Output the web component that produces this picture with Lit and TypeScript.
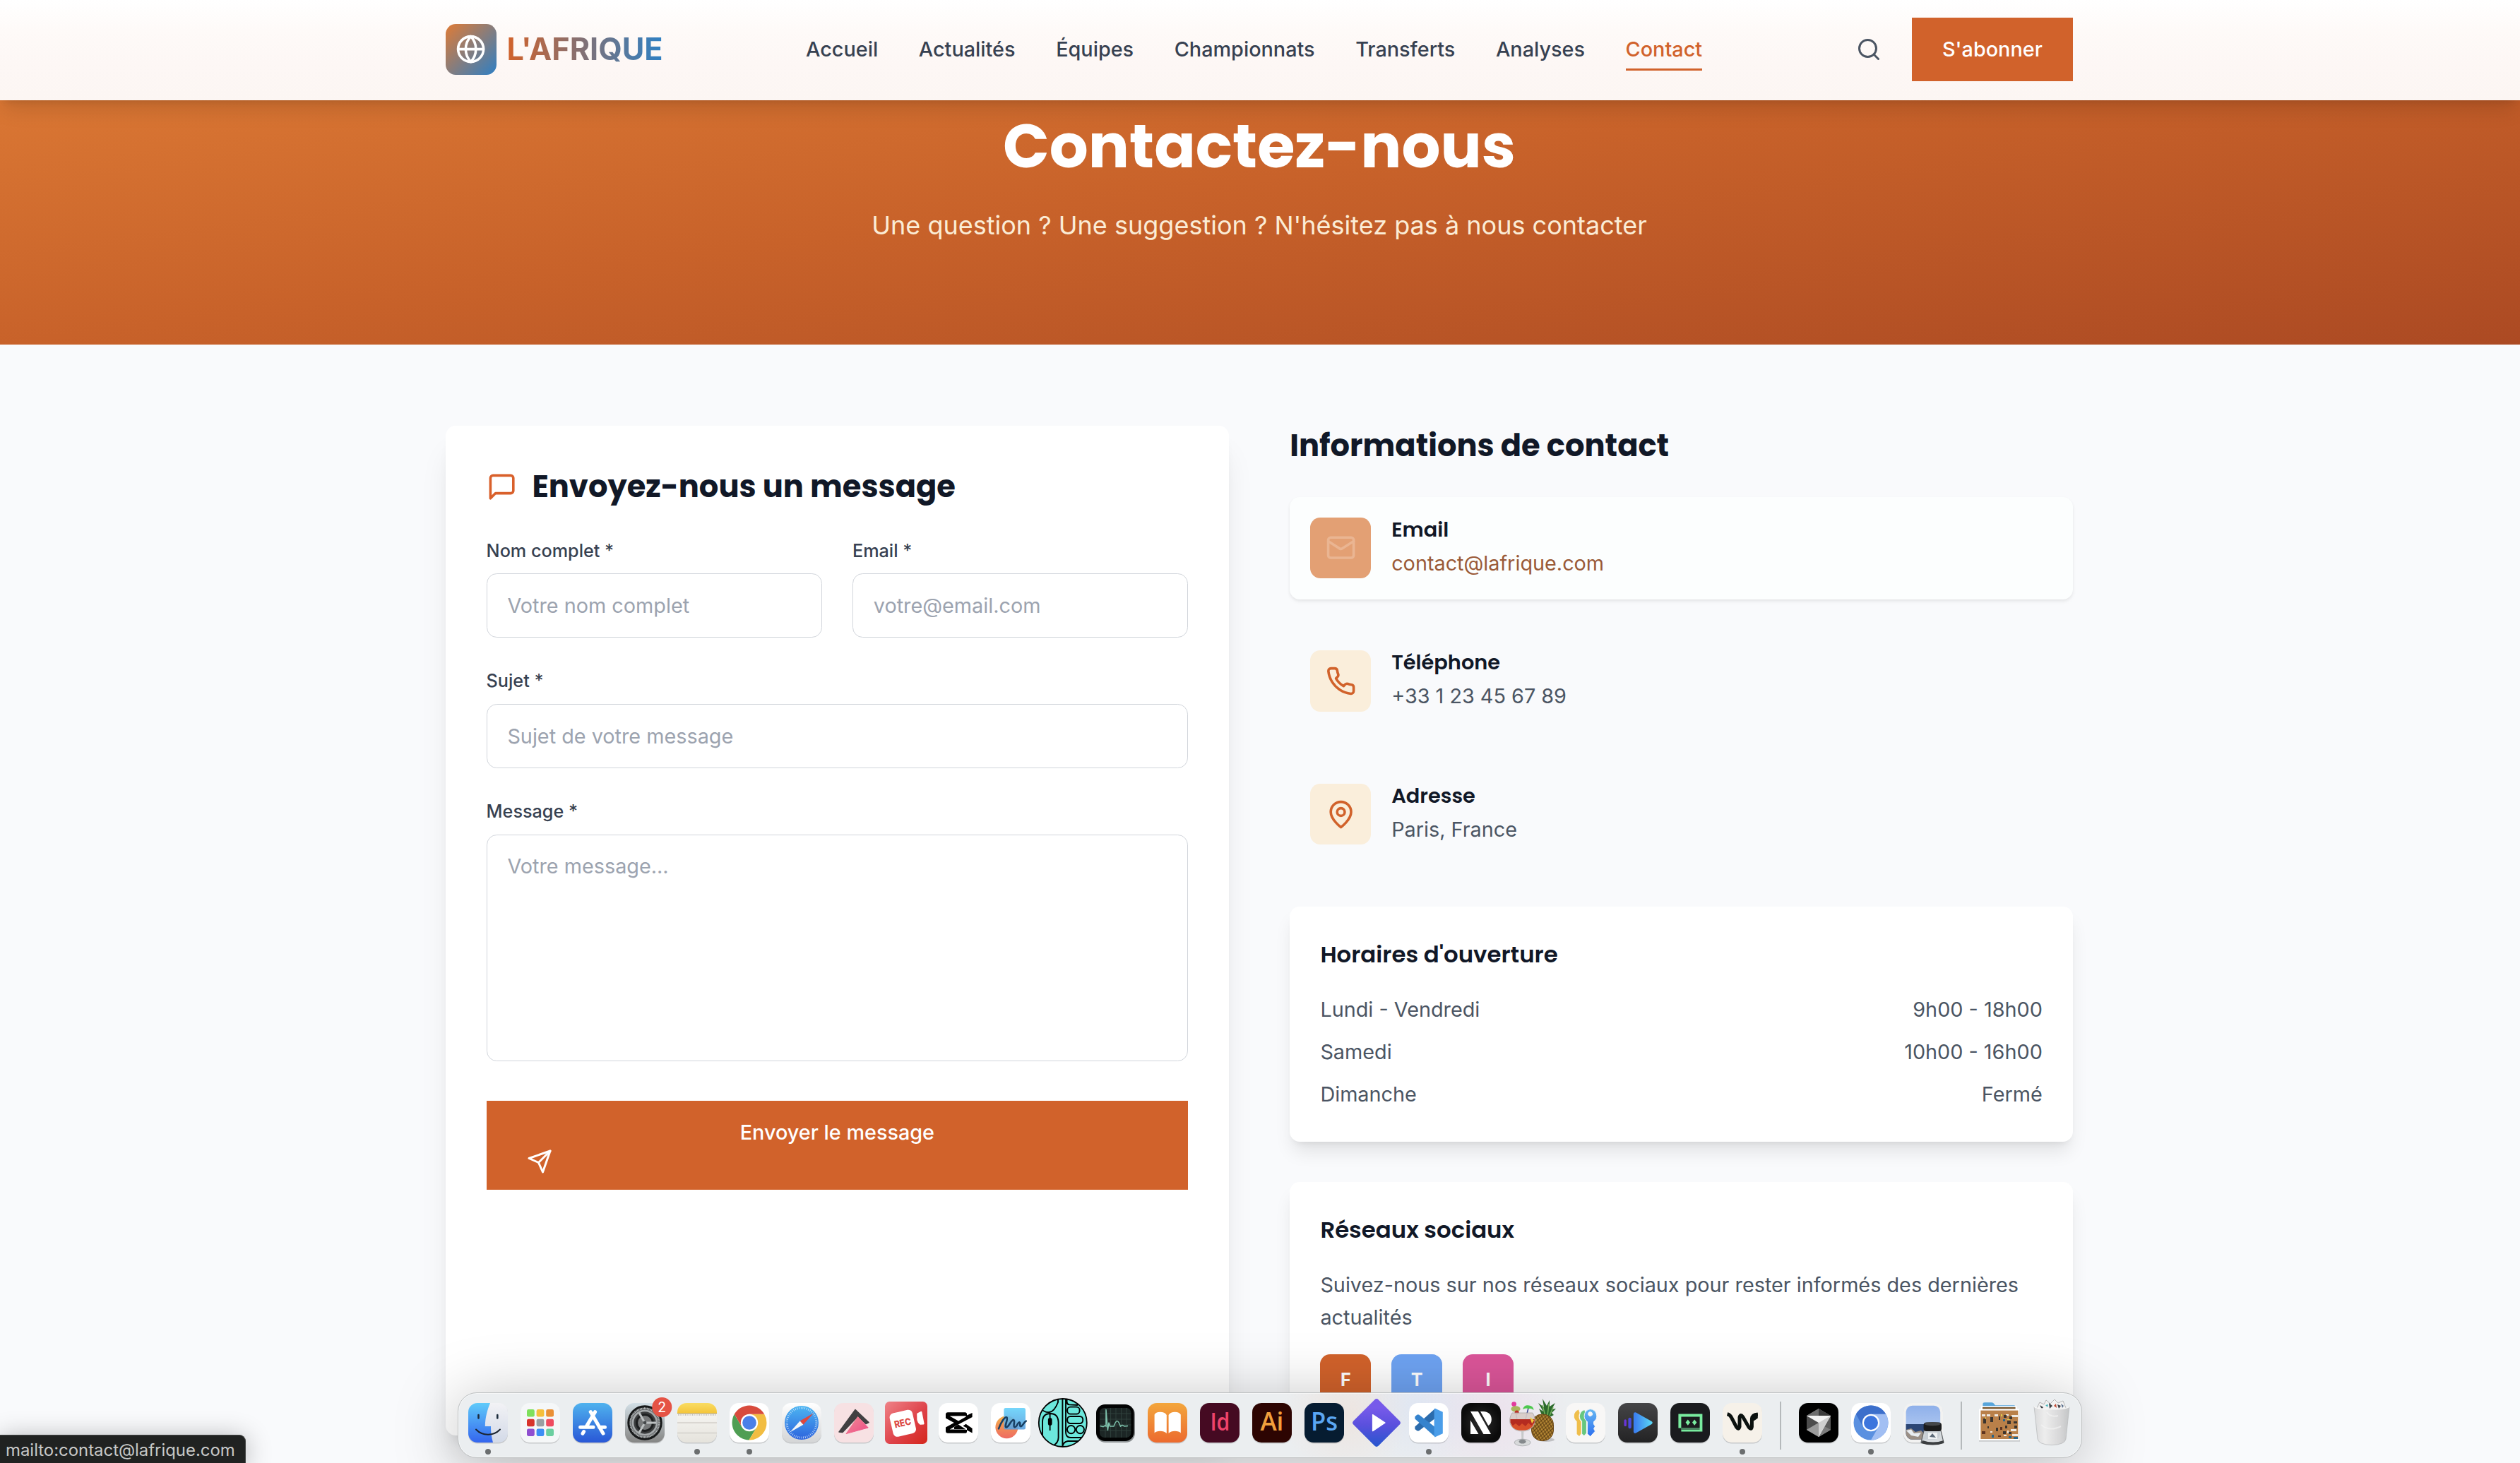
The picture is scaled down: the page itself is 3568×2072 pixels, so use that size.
import { LitElement, html, css, svg, type TemplateResult } from "lit";
import { customElement, property } from "lit/decorators.js";
import { classMap } from "lit/directives/class-map.js";

const stroke = (body: TemplateResult) => html`
  <svg class="icon" viewBox="0 0 24 24" width="100%" height="100%" fill="none" stroke="currentColor"
    stroke-width="2" stroke-linecap="round" stroke-linejoin="round">${body}</svg>`;

const iconStyles = css`
  .icon {
    display: block;
  }
`;

const icons = {
  globe: stroke(svg`<circle cx="12" cy="12" r="10"/><path d="M12 2a14.5 14.5 0 0 0 0 20 14.5 14.5 0 0 0 0-20"/><path d="M2 12h20"/>`),
  search: stroke(svg`<circle cx="11" cy="11" r="8"/><path d="m21 21-4.3-4.3"/>`),
  message: stroke(svg`<path d="M21 15a2 2 0 0 1-2 2H7l-4 4V5a2 2 0 0 1 2-2h14a2 2 0 0 1 2 2z"/>`),
  mail: stroke(svg`<rect width="20" height="16" x="2" y="4" rx="2"/><path d="m22 7-8.97 5.7a1.94 1.94 0 0 1-2.06 0L2 7"/>`),
  phone: stroke(svg`<path d="M22 16.92v3a2 2 0 0 1-2.18 2 19.79 19.79 0 0 1-8.63-3.07 19.5 19.5 0 0 1-6-6 19.79 19.79 0 0 1-3.07-8.67A2 2 0 0 1 4.11 2h3a2 2 0 0 1 2 1.72 12.84 12.84 0 0 0 .7 2.81 2 2 0 0 1-.45 2.11L8.09 9.91a16 16 0 0 0 6 6l1.27-1.27a2 2 0 0 1 2.11-.45 12.84 12.84 0 0 0 2.81.7A2 2 0 0 1 22 16.92z"/>`),
  pin: stroke(svg`<path d="M20 10c0 6-8 12-8 12s-8-6-8-12a8 8 0 0 1 16 0Z"/><circle cx="12" cy="10" r="3"/>`),
  send: stroke(svg`<path d="m22 2-7 20-4-9-9-4Z"/><path d="M22 2 11 13"/>`),
};

/* ---------- Dock artwork: every tile is drawn in a 74 x 74 cell ---------- */

const tile = (fill: string) => svg`<rect x="9" y="10" width="56" height="56.5" rx="13" fill="#000" opacity=".16"/><rect x="9" y="9" width="56" height="56" rx="13" fill=${fill}/>`;

const grid = [
  ["#7fe05c", "#f5bf3c", "#ea9036"],
  ["#d8342c", "#9a9fa3", "#ef4c60"],
  ["#8f4fd0", "#3c8ef5", "#6bcfa0"],
];

const dockArt: Record<string, TemplateResult> = {
  finder: svg`
    <defs><linearGradient id="fi" x2="0" y2="1"><stop stop-color="#5fcbfa"/><stop offset="1" stop-color="#3465ee"/></linearGradient>
    <linearGradient id="fj" x2="0" y2="1"><stop stop-color="#f2f2f5"/><stop offset="1" stop-color="#d3dae8"/></linearGradient></defs>
    ${tile("url(#fj)")}
    <path d="M22 9H40C36 19 33 29 32.8 42H41C41 51 42 58 44 65H22A13 13 0 0 1 9 52V22A13 13 0 0 1 22 9Z" fill="url(#fi)"/>
    <path d="M23.5 26v4.5M50.3 26v4.5" stroke="#1c2c3c" stroke-width="2.6" stroke-linecap="round"/>
    <path d="M20 46.5C29 56 45 56 54 46.5" fill="none" stroke="#1b2430" stroke-width="2" stroke-linecap="round"/>`,
  launchpad: svg`${tile("#f5f7f8")}${grid.map((row, r) => row.map((c, i) => svg`<rect x=${18 + i * 13.6} y=${18 + r * 13.7} width="10.8" height="10.6" rx="2.4" fill=${c}/>`))}`,
  appstore: svg`
    <defs><linearGradient id="as" x2="0" y2="1"><stop stop-color="#4fb2ee"/><stop offset="1" stop-color="#2957d6"/></linearGradient></defs>
    ${tile("url(#as)")}
    <g stroke="#fff" stroke-width="5" stroke-linecap="round" fill="none"><path d="M40.6 21.6 28 42.6M24.6 49.5l-1.6 2.8M34.2 21.6 52 52.2M19.6 43.3H38M46.5 43.3h8"/></g>`,
  settings: svg`
    <defs><linearGradient id="se" x2="0" y2="1"><stop stop-color="#d2dfe6"/><stop offset="1" stop-color="#858584"/></linearGradient></defs>
    ${tile("url(#se)")}
    <circle cx="37" cy="37" r="23" fill="#5d6062" stroke="#17191a" stroke-width="3.4"/>
    <circle cx="37" cy="37" r="20.4" fill="none" stroke="#b6babb" stroke-width="2.6" stroke-dasharray="1.2 .9"/>
    <circle cx="37" cy="37" r="17" fill="#3b3d3e" stroke="#a5a9ab" stroke-width="2.6"/>
    <circle cx="37" cy="37" r="11.4" fill="#77797a" stroke="#1d1f20" stroke-width="3"/>
    <path d="M37 37H53M37 37 29 23M37 37 29 51" stroke="#bcc0c1" stroke-width="3"/>
    <circle cx="37" cy="37" r="2.4" fill="#45484a"/>
    <circle cx="61.3" cy="15" r="14" fill="#e55345"/>
    <text x="61.3" y="22" font-size="19.5" text-anchor="middle" fill="#fff" font-family="Inter, sans-serif">2</text>`,
  notes: svg`
    <defs><linearGradient id="no" x2="0" y2="1"><stop stop-color="#f9dc63"/><stop offset="1" stop-color="#f4c53a"/></linearGradient>
    <linearGradient id="np" x2="0" y2="1"><stop stop-color="#fbfaf8"/><stop offset="1" stop-color="#e5e3dc"/></linearGradient></defs>
    ${tile("url(#np)")}
    <path d="M9 23.4V22A13 13 0 0 1 22 9H52A13 13 0 0 1 65 22V23.4Z" fill="url(#no)"/>
    <path d="M9 23.6H65" stroke="#b99a45" stroke-width="1"/>
    <path d="M10 25.8H64" stroke="#bdbbb4" stroke-width="1.8" stroke-dasharray="1.1 1.4"/>
    <path d="M9 37H65M9 51.5H65" stroke="#d2d0ca" stroke-width="1.3"/>`,
  chrome: svg`${tile("#fff")}
    <path d="M15.8 24.8A24.5 24.5 0 0 0 36.5 61.5L47.6 43.1 37 37 26.4 43.1Z" fill="#4f9e53"/>
    <path d="M58.2 24.8A24.5 24.5 0 0 1 36.5 61.5L47.6 43.1 37 24.8Z" fill="#f2bd42"/>
    <path d="M15.8 24.8A24.5 24.5 0 0 1 58.2 24.8H37L26.4 43.1Z" fill="#d84b3d"/>
    <circle cx="37" cy="37" r="12.2" fill="#fff"/><circle cx="37" cy="37" r="9.8" fill="#4a7fe8"/>`,
  safari: svg`
    <defs><linearGradient id="sa" x2="0" y2="1"><stop stop-color="#4cb5f2"/><stop offset="1" stop-color="#2d63dd"/></linearGradient>
    <linearGradient id="sb" x2="0" y2="1"><stop stop-color="#fff"/><stop offset="1" stop-color="#d4d5d6"/></linearGradient></defs>
    ${tile("url(#sb)")}<circle cx="37" cy="37" r="24" fill="url(#sa)"/>
    <circle cx="37" cy="37" r="21" fill="none" stroke="#e3f1fc" stroke-width="3" stroke-dasharray=".8 1.9" opacity=".85"/>
    <path d="M53.8 23.6 39.3 39.8 34.6 34.4Z" fill="#e0473d"/><path d="M20.4 50.6 34.6 34.4 39.3 39.8Z" fill="#f4f6f8"/>`,
  arctype: svg`
    <defs><linearGradient id="ar" x2="1" y2="1"><stop stop-color="#ee8d93"/><stop offset="1" stop-color="#f04a87"/></linearGradient></defs>
    ${tile("#f7e1e3")}
    <path d="M39 18.5 58 36.5 54 38.5 42.5 28 21 50.5 16 50Z" fill="#414042" stroke="#414042" stroke-width="1.5" stroke-linejoin="round"/>
    <path d="M42.6 28.5 57.2 44 26 52.6Z" fill="url(#ar)" stroke="url(#ar)" stroke-linejoin="round"/>`,
  rec: svg`
    <defs><linearGradient id="re" x2="1" y2="1"><stop stop-color="#ef8388"/><stop offset=".55" stop-color="#de434a"/><stop offset="1" stop-color="#d5261c"/></linearGradient></defs>
    <rect x="7" y="7" width="60" height="60" rx="6.5" fill="url(#re)"/>
    <g transform="rotate(-13 32 37)"><rect x="15.6" y="20.8" width="33" height="34" rx="6" fill="#fff"/>
    <text x="32" y="42" text-anchor="middle" font-size="13.5" font-weight="800" textLength="24" lengthAdjust="spacingAndGlyphs" fill="#dc4a44" font-family="Inter, sans-serif">REC</text></g>
    <path d="M53.4 24.5 58.2 22 61.4 38.2 57 38.6Q54.5 37 53.6 33Z" fill="#fff" stroke="#fff" stroke-width="2.4" stroke-linejoin="round"/>`,
  capcut: svg`${tile("#fff")}
    <path d="M56.6 22.9V29L31 42.6V47H49V44.6L43.4 41.4 47.6 38.8 56.6 45V51.4L49 47.6V49.4Q49 51.8 46.4 51.8H22Q19 51.8 19 48.8V43.6L30.8 37 19 30.6V25.4Q19 22.2 22 22.2H46.4Q49 22.2 49 24.8V26.6ZM24.6 27.6 37 34.4 47.6 28.6V27.2ZM24.6 46.6H47.6L37 39.6Z" fill="#000" fill-rule="evenodd"/>`,
  freeform: svg`
    <defs><linearGradient id="fr" x2="0" y2="1"><stop stop-color="#f4b04a"/><stop offset="1" stop-color="#ee6a62"/></linearGradient>
    <linearGradient id="fs" x2="0" y2="1"><stop stop-color="#66d2fa"/><stop offset="1" stop-color="#5a9ede"/></linearGradient></defs>
    ${tile("#fff")}<circle cx="31.4" cy="43.2" r="16" fill="url(#fr)"/>
    <rect x="27.4" y="16" width="30.6" height="30.6" rx="2.5" fill="url(#fs)" opacity=".9"/>
    <path d="M20 45.4C23 37 28.4 28.2 31.4 29.4C34 31 27.4 42.6 30.6 43.4C34 44 37.6 32.4 41 33C44 34 39.6 42.4 42.6 43.2C45.6 43.8 47.4 35.6 49.6 36.4C51.6 37.4 48.8 42 51.4 42.2C54 42.2 55 36.4 58.8 34.6" fill="none" stroke="#183f63" stroke-width="2.6" stroke-linecap="round"/>`,
  peripherals: svg`
    <defs><clipPath id="pe"><circle cx="36.8" cy="37" r="34"/></clipPath></defs>
    <circle cx="36.8" cy="37" r="34" fill="#6ce8dc" stroke="#000" stroke-width="1.8"/>
    <g clip-path="url(#pe)" fill="none" stroke="#000" stroke-width="1.9">
      <path d="M8 62V36Q8 24 19 24T30.6 36V58Q30.6 66 22 70M18.6 24v8M18.6 40v8"/><rect x="16.8" y="31" width="3.8" height="9" rx="1.9" fill="#000"/>
      <path d="M6 17Q11 23 18 22T30 8V2M36.4 2V72M41 2V50Q41 58 48 58H72M36 72Q37 64 44 63H70"/>
      <path d="M42.6 2V8Q43 11 46 11.4L58 12"/>
      <rect x="43.2" y="14.6" width="17.4" height="10" rx="4.4"/><rect x="43.2" y="28" width="22" height="10" rx="4.4"/>
      <circle cx="48.6" cy="46.6" r="5.6"/><circle cx="61.4" cy="46.6" r="5.6"/></g>`,
  activity: svg`<rect x="10" y="12" width="55" height="53" rx="13" fill="#8c9193"/><rect x="10" y="11" width="53.6" height="52" rx="12.5" fill="#020303"/><rect x="15" y="16" width="44.4" height="42" rx="6.5" fill="#1c2625"/>
    <path d="M23 16V58M30.6 16V58M38 16V58M45.6 16V58M53 16V58M15 24H59.4M15 32H59.4M15 40H59.4M15 48H59.4" stroke="#32443f" stroke-width=".9"/>
    <path d="M15.5 41.5 20 42.6 22.6 41 24 42V18L26.4 48 28 36.6 29.6 42H35Q38 34 40 34.6T44.4 42L47 40.4 50 42 55 41.5" fill="none" stroke="#7fc4ae" stroke-width="1.5"/>`,
  books: svg`
    <defs><linearGradient id="bo" x2="0" y2="1"><stop stop-color="#f3a63c"/><stop offset="1" stop-color="#ec6a2f"/></linearGradient></defs>
    ${tile("url(#bo)")}
    <path d="M35.8 26Q33 21.8 26.6 21.8T18.6 25.6V51.6Q21 48.8 26.6 48.8T35.8 52ZM38.6 26Q41.4 21.8 47.6 21.8T55.8 25.6V51.6Q53.4 48.8 47.6 48.8T38.6 52Z" fill="#fff"/>`,
  indesign: svg`${tile("#450a22")}<text x="23.4" y="48.4" font-size="35" font-weight="600" textLength="28" lengthAdjust="spacingAndGlyphs" fill="#ef436b" font-family="'Open Sans', sans-serif">Id</text>`,
  illustrator: svg`${tile("#2d0502")}<text x="20.4" y="48.4" font-size="36" font-weight="600" textLength="33" lengthAdjust="spacingAndGlyphs" fill="#f2a03c" font-family="'Open Sans', sans-serif">Ai</text>`,
  photoshop: svg`${tile("#061c31")}<text x="18" y="48.4" font-size="36" font-weight="600" textLength="38" lengthAdjust="spacingAndGlyphs" fill="#5aa6f3" font-family="'Open Sans', sans-serif">Ps</text>`,
  diamond: svg`
    <defs><linearGradient id="di" x2="1" y2="1"><stop offset=".2" stop-color="#775aea"/><stop offset=".55" stop-color="#5a50dd"/><stop offset="1" stop-color="#2457cd"/></linearGradient></defs>
    <rect x="12" y="12" width="50" height="50" rx="4" transform="rotate(45 37 37)" fill="url(#di)"/>
    <path d="M31.6 25.6 49 37 31.6 48.6Z" fill="#fff" stroke="#fff" stroke-width="1.4" stroke-linejoin="round"/>`,
  vscode: svg`${tile("#fff")}
    <path d="M45.8 17 17.4 42.6V46L20.6 48.6H23L47 30Z" fill="#2b6bac"/>
    <path d="M45.8 57 17.4 31.4V28.2L20.6 25.6H23L47 44Z" fill="#3583cd"/>
    <path d="M45.6 16.6 56.8 21.8V52.2L45.6 57.4 44.6 55V19Z" fill="#4a9de9"/>`,
  davinci: svg`
    <defs><radialGradient id="da"><stop stop-color="#2c2c2c"/><stop offset="1" stop-color="#0b0b0b"/></radialGradient></defs>
    ${tile("url(#da)")}
    <path d="M22 21H32.8L51 53H40.4ZM22 33.6 33.4 53H22ZM36 21H40Q51.8 21.6 51.8 32.6 51.8 38.4 47.2 41Z" fill="#fff"/>`,
  pineapple: svg`
    <ellipse cx="55" cy="61" rx="12" ry="3" fill="#000" opacity=".18"/>
    <defs><pattern id="pi" width="5" height="6" patternUnits="userSpaceOnUse" patternTransform="rotate(8)"><rect width="5" height="6" fill="#b88a35"/><path d="M0 0 5 6M5 0 0 6" stroke="#5a3c12" stroke-width="1.1"/></pattern></defs>
    <path d="M50 28 45 17 51 21 44 9 52 15 50 3 56 13 60 5 60 14 68 9 63 18 69 17 63 23 66 26 60 29Z" fill="#2c6a2c"/>
    <path d="M54 28 50 12M57 28 59 10M60 27 65 15" stroke="#79b45e" stroke-width="1.4"/>
    <rect x="34.5" y="25" width="31" height="37.5" rx="14.5" fill="url(#pi)" stroke="#6b4716" stroke-width="1"/>
    <path d="M14 33 10.4 12M26 32 30 16" stroke="#3a4590" stroke-width="1.5"/>
    <circle cx="9.6" cy="10.6" r="3.4" fill="#e23a9d"/><ellipse cx="12" cy="17.4" rx="6.6" ry="4.2" fill="#a7b55c"/><circle cx="13.6" cy="22.6" r="3" fill="#c02f24"/>
    <path d="M22 18Q24 11 31 12.4 37 13 37.6 19 33 16 30.4 17.2 26 15.4 22 18Z" fill="#4dc94e"/>
    <path d="M7 23H36Q41 31 38.6 39 34 49 21.4 49T4.4 39Q2 31 7 23Z" fill="#d8cbc7" opacity=".92" stroke="#a5a1a0" stroke-width=".8"/>
    <path d="M4.6 32H38.6Q39 43 30 46.5 21 49 12 46.5 4 43 4.6 32Z" fill="#d7502a"/><path d="M4.6 32H38.6V37L34 41 30 37 26 42 21 38 17 42 12 38 8 41 4.6 37Z" fill="#b42b20"/>
    <path d="M20 49H23.4L23 62H20.4Z" fill="#c7c9ca"/><ellipse cx="21.6" cy="65" rx="11.4" ry="4.8" fill="#d7d9da" stroke="#a3a6a8" stroke-width=".8"/><ellipse cx="21.6" cy="63.6" rx="5" ry="3" fill="#85898c"/>
    <path d="M32 29 38 33.5 35 38Z" fill="#f0cc3b"/>`,
  passwords: svg`
    <defs><linearGradient id="pa" x2="0" y2="1"><stop stop-color="#67b8f2"/><stop offset="1" stop-color="#2c6fef"/></linearGradient></defs>
    ${tile("#f8f7f6")}
    <path d="M27 18.4A9.6 9.6 0 0 0 24.6 35V53L28 56 31 52V30Z" fill="#efbe4b"/>
    <path d="M36 18.4A9.6 9.6 0 0 0 31.4 35V53L35 56 38.6 52V30Z" fill="#66c77f" stroke="#f8f7f6" stroke-width="1.4"/>
    <path d="M43.6 17.6A9.8 9.8 0 0 1 48.6 35.4V39L50.6 42 48.6 45.6 50.6 49 43.6 56.6 39.4 52.6V35.4A9.8 9.8 0 0 1 43.6 17.6ZM43.6 21.6A3 3 0 1 0 43.7 21.6Z" fill="url(#pa)" stroke="#f8f7f6" stroke-width="1" fill-rule="evenodd"/>`,
  player: svg`
    <defs><linearGradient id="pl"><stop stop-color="#3c80f0"/><stop offset="1" stop-color="#58d2f6"/></linearGradient>
    <linearGradient id="pm" x2="0" y2="1"><stop stop-color="#454547"/><stop offset="1" stop-color="#232324"/></linearGradient></defs>
    ${tile("url(#pm)")}
    <path d="M33.2 24.6 55.4 37 33.2 49.6Z" fill="url(#pl)" stroke="url(#pl)" stroke-width="4.6" stroke-linejoin="round"/>
    <path d="M25.6 32V43" stroke="#4b49dd" stroke-width="4.4" stroke-linecap="round"/><path d="M19.2 34V40.4" stroke="#6a35d8" stroke-width="3.4" stroke-linecap="round"/>`,
  robot: svg`${tile("#1a1b1e")}
    <path d="M20.4 24.4H54.4V49.6H24.4V44.6H20.4ZM24.4 28.4V44.6H50.6V28.4Z" fill="#79ec9f" fill-rule="evenodd"/>
    <path d="M24.4 46H50.6" stroke="#1a1b1e" stroke-width="1"/>
    <path d="M33.8 32.4 37 36.6 33.8 40.8 30.6 36.6ZM43.2 32.4 46.4 36.6 43.2 40.8 40 36.6Z" fill="#79ec9f"/>`,
  wave: svg`${tile("#f6f1e9")}
    <path d="M15.6 24.6Q19.6 25.6 21.4 29.4L28.6 43.2Q31.6 47.6 33 42.6V29.4Q34.4 24 37.6 28.6L46 43.2Q49.6 47.8 50.4 42.6V31.4Q51 25.6 58.8 25" fill="none" stroke="#0b110f" stroke-width="5"/>
    <path d="M51 27 54 24.4 58.8 23.4V30.4L54.6 33.4 51 35Z" fill="#0b110f"/>`,
  cursor: svg`${tile("#000")}
    <path d="M37 17 54 27V47L37 57 20 47V27Z" fill="#8b8b8b"/><path d="M20 27 37 17V27Z" fill="#6e6e6e"/><path d="M37 17 54 27H37Z" fill="#3c3c3c"/>
    <path d="M20 27 37 37 20 47Z" fill="#4d4d4d"/><path d="M20 47 37 37V57Z" fill="#9b9b9b"/><path d="M54 27V47L44 42Z" fill="#5c5c5c"/><path d="M54 47 37 57 45 42Z" fill="#7c7c7c"/>
    <path d="M20 27H54L37 57V37Z" fill="#f3f3f3"/><path d="M54 27 37 57V37Z" fill="#cfcfcf"/>`,
  chromium: svg`${tile("#fff")}
    <circle cx="37" cy="37" r="24.5" fill="#5a90e0"/><path d="M15.8 24.8A24.5 24.5 0 0 1 58.2 24.8H37L26 43Z" fill="#3c6fcb"/>
    <path d="M58.2 24.8A24.5 24.5 0 0 1 37 61.5L47.6 43.1 40 24.8Z" fill="#a2bff3"/>
    <circle cx="37" cy="37" r="12.2" fill="#fff"/><circle cx="37" cy="37" r="10" fill="#3c75dd"/>`,
  preview: svg`
    <defs><linearGradient id="pr" x2="0" y2="1"><stop stop-color="#8fb0ea"/><stop offset="1" stop-color="#bcd2f4"/></linearGradient></defs>
    ${tile("#f2f2f1")}<rect x="12.6" y="12.8" width="48.6" height="48" rx="9" fill="url(#pr)"/>
    <path d="M12.6 39H61.2V52A9 9 0 0 1 52 60.8H21.6A9 9 0 0 1 12.6 52Z" fill="#2c4675"/>
    <path d="M12.6 47 20 45 26 50 34 48 40 54 36 60.8H21.6A9 9 0 0 1 12.6 52Z" fill="#9a8f86"/><path d="M13 48 20 46.4 24 52 34 51 30 57 20 55Z" fill="#e8edf2"/>
    <path d="M38 48H62L66 65Q52 70 34 65Z" fill="#d5dadd" opacity=".92" stroke="#55595c" stroke-width="1.2"/>
    <rect x="44" y="51" width="13" height="9" fill="#eef1f3"/><path d="M46 57 50 52 55 58Z" fill="#5d6b79"/>
    <path d="M36 62Q51 67 66 62V66Q51 71 34 66Z" fill="#3b3e40"/>
    <rect x="37.6" y="36.4" width="25.4" height="12.6" rx="4" fill="#1b1c1d"/><ellipse cx="50.3" cy="38.6" rx="11.6" ry="2.6" fill="#44474a"/>`,
  downloads: svg`
    <path d="M13.4 20V10.6Q13.4 8.2 16 8.2H25.4Q27.6 8.2 28.8 9.6L31 12.2H57.4Q59.6 12.2 59.6 14.4V20Z" fill="#58a5da"/>
    <rect x="11" y="13.4" width="50.6" height="9" fill="#fff"/><rect x="13" y="15" width="46.6" height="4" fill="#7c5a32"/>
    <rect x="8" y="18" width="58" height="45.6" fill="#000" opacity=".18"/><rect x="8" y="17.4" width="57.6" height="44.6" fill="#fff"/><rect x="10.4" y="19.6" width="53" height="40.4" fill="#b98049"/>
    <g fill="#eee9e2"><path d="M12 25h5v3h-5zM19 25h5v3h-5zM30 25h5v3h-5zM54 26h9v3h-9zM46 25h4v2h-4zM53 46h8v3h-8zM55 53h8v3h-8zM43 54h4v2h-4zM24 49h3v2h-3zM48 48h2v4h-2z"/></g>
    <g fill="#3b342e"><path d="M14 31h4v7h-4zM24 29h4v7h-4zM36 28h2v5h-2zM43 26h4v4h-4zM51 28h4v4h-4zM48 34h5v5h-5zM57 35h5v3h-5zM45 41h3v4h-3zM20 42h2v3h-2zM32 44h3v5h-3zM42 49h4v4h-4zM50 50h4v3h-4zM58 41h4v4h-4z"/></g>
    <g fill="#27658a"><path d="M42 32h3v3h-3zM57 57h6v3h-6zM26 54h3v4h-3zM50 56h4v3h-4z"/></g><g fill="#dccb4e"><path d="M17 29h1v3h-1zM39 25h2v3h-2zM48 32h4v1h-4z"/></g>
    <g fill="#5f3420"><path d="M12 49h5v4h-5zM35 55h4v2h-4zM38 43h3v4h-3z"/></g>`,
  trash: svg`
    <defs><linearGradient id="tr"><stop stop-color="#d9dadb"/><stop offset=".3" stop-color="#ededed"/><stop offset=".75" stop-color="#d6d6d7"/><stop offset="1" stop-color="#c3c5c6"/></linearGradient></defs>
    <path d="M16 16 20 8 26 11 29 5 35 10 41 4 46 9 53 6 57 16 50 19H22Z" fill="#f2f2f2" stroke="#a4a4a4" stroke-width=".8"/>
    <path d="M20 12 25 15 23 18ZM33 9 38 13 34 17ZM45 11 50 13 47 17Z" fill="#3e4146"/><path d="M28 12 32 11 31 15Z" fill="#46b5bb"/><path d="M40 13 43 10 44 16Z" fill="#bf4c36"/><path d="M50 10 54 13 52 16Z" fill="#586e8c"/>
    <path d="M12 13.6Q14 17.8 37 17.8T62 13.6L57 60Q55.6 68 37 68.6 18.6 68 17 60Z" fill="url(#tr)" stroke="#b9bbbc" stroke-width=".8"/>
    <path d="M12 13.6Q14 17.8 37 17.8T62 13.6" fill="none" stroke="#f8f8f8" stroke-width="1.6"/>
    <path d="M30 22Q36 30 46 27M22 40Q34 50 50 42" fill="none" stroke="#f5f5f5" stroke-width="2" opacity=".6"/>`,
};

type DockEntry = { icon: string; open?: boolean } | "gap";

const dockEntries: DockEntry[] = [
  { icon: "finder", open: true }, { icon: "launchpad" }, { icon: "appstore" }, { icon: "settings" },
  { icon: "notes", open: true }, { icon: "chrome", open: true }, { icon: "safari" }, { icon: "arctype" },
  { icon: "rec" }, { icon: "capcut" }, { icon: "freeform" }, { icon: "peripherals" }, { icon: "activity" },
  { icon: "books" }, { icon: "indesign" }, { icon: "illustrator" }, { icon: "photoshop" }, { icon: "diamond" },
  { icon: "vscode", open: true }, { icon: "davinci" }, { icon: "pineapple" }, { icon: "passwords" },
  { icon: "player" }, { icon: "robot" }, { icon: "wave", open: true }, "gap",
  { icon: "cursor" }, { icon: "chromium", open: true }, { icon: "preview" }, "gap",
  { icon: "downloads" }, { icon: "trash" },
];

@customElement("system-dock")
export class SystemDock extends LitElement {
  static styles = css`
    :host {
      display: flex;
      box-sizing: border-box;
      height: 93px;
      padding: 5px 5px 0;
      border: 1px solid #bcbfc0;
      border-radius: 27px;
      background:
        radial-gradient(circle at 1257px 30px, rgba(240, 214, 200, 0.4), transparent 90px),
        radial-gradient(circle at 1358px 20px, rgba(212, 222, 244, 0.5), transparent 90px),
        radial-gradient(circle at 1462px 30px, rgba(238, 208, 232, 0.42), transparent 110px),
        #ebeef0;
      box-shadow: inset 0 0 0 1px rgba(255, 255, 255, 0.55), 0 12px 92px rgba(0, 0, 0, 0.27);
    }
    .cell {
      display: flex;
      flex-direction: column;
      align-items: center;
      width: 74px;
    }
    .art {
      display: block;
      width: 74px;
      height: 74px;
      overflow: visible;
    }
    .dot {
      width: 8px;
      height: 8px;
      border-radius: 50%;
      background: #6b6e6f;
    }
    .gap {
      width: 2px;
      height: 68px;
      margin: 7px 16px 0;
      background: #b5b9bb;
    }
  `;

  render() {
    return dockEntries.map((e) =>
      e === "gap"
        ? html`<div class="gap"></div>`
        : html`<div class="cell">
            <svg class="art" viewBox="0 0 74 74">${dockArt[e.icon]}</svg>
            ${e.open ? html`<span class="dot"></span>` : null}
          </div>`,
    );
  }
}

@customElement("site-header")
export class SiteHeader extends LitElement {
  static styles = [iconStyles, css`
    :host {
      display: block;
      height: 142px;
      background: linear-gradient(#ffffff 0, #fefaf8 45px, #fdf7f5 90px, #fcf6f3 100%);
      box-shadow: 0 18px 27px -5.4px rgba(0, 0, 0, 0.12), 0 7.2px 10.8px -7.2px rgba(0, 0, 0, 0.12);
    }
    .bar {
      display: flex;
      align-items: center;
      justify-content: space-between;
      box-sizing: border-box;
      width: 2304px;
      height: 140px;
      margin: 0 auto;
    }
    .brand {
      display: flex;
      align-items: center;
      gap: 14.4px;
    }
    .mark {
      display: grid;
      place-items: center;
      width: 72px;
      height: 72px;
      border-radius: 14.4px;
      color: #fff;
      background: linear-gradient(135deg, #e07b35, #2e7fc4);
    }
    .mark i {
      width: 43.2px;
      height: 43.2px;
    }
    .name {
      font-size: 43.2px;
      line-height: 57.6px;
      font-weight: 700;
      color: transparent;
      background: linear-gradient(90deg, #d2622a, #2e80c4);
      background-clip: text;
      -webkit-background-clip: text;
    }
    .links {
      display: flex;
      gap: 57.6px;
      margin-left: -15px;
    }
    .link {
      position: relative;
      line-height: 43.2px;
      font-weight: 500;
      color: #374151;
    }
    .active {
      color: #d1622b;
    }
    .active::after {
      content: "";
      position: absolute;
      left: 0;
      right: 0;
      bottom: -8.4px;
      height: 3px;
      background: #d1622b;
    }
    .actions {
      display: flex;
      align-items: center;
      gap: 43.2px;
    }
    .find {
      width: 36px;
      height: 36px;
      color: #4b5563;
    }
    .subscribe {
      padding: 0 43.2px;
      line-height: 90px;
      font-weight: 500;
      color: #fff;
      background: #d1622b;
    }
  `];

  private links = ["Accueil", "Actualités", "Équipes", "Championnats", "Transferts", "Analyses", "Contact"];

  render() {
    return html`<div class="bar">
      <div class="brand">
        <span class="mark"><i>${icons.globe}</i></span>
        <span class="name">L'AFRIQUE</span>
      </div>
      <nav class="links">
        ${this.links.map((l) => html`<a class=${classMap({ link: true, active: l === "Contact" })}>${l}</a>`)}
      </nav>
      <div class="actions">
        <span class="find">${icons.search}</span>
        <span class="subscribe">S'abonner</span>
      </div>
    </div>`;
  }
}

@customElement("contact-form")
export class ContactForm extends LitElement {
  static styles = [iconStyles, css`
    :host {
      display: block;
      box-sizing: border-box;
      padding: 57.6px;
      border-radius: 14.4px;
      background: #fff;
      box-shadow: 0 36px 45px -9px rgba(0, 0, 0, 0.1), 0 14.4px 18px -10.8px rgba(0, 0, 0, 0.1);
    }
    .title {
      display: flex;
      align-items: center;
      gap: 21.6px;
      margin: 0 0 43.2px;
      font: 700 43.2px/57.6px Poppins, sans-serif;
      color: #111827;
    }
    .title i {
      width: 43.2px;
      height: 43.2px;
      color: #d9602b;
    }
    .grid {
      display: grid;
      grid-template-columns: 1fr 1fr;
      gap: 43.2px;
    }
    .wide {
      grid-column: span 2;
    }
    .label {
      display: block;
      margin-bottom: 14.4px;
      font-size: 25.2px;
      line-height: 36px;
      font-weight: 500;
      color: #374151;
    }
    .input {
      display: block;
      box-sizing: border-box;
      width: 100%;
      height: 91.3px;
      padding: 21.6px 28.8px;
      border: 1px solid #d1d5db;
      border-radius: 14.4px;
      outline: none;
      background: #fff;
      font: 400 28.8px/46px Inter, sans-serif;
      color: #111827;
      resize: none;
    }
    .input::placeholder {
      color: #9ca3af;
      opacity: 1;
    }
    .area {
      height: 321px;
    }
    .submit {
      display: block;
      box-sizing: border-box;
      width: 100%;
      height: 126.4px;
      margin-top: 56px;
      padding: 22px 57.6px;
      background: #d1622b;
      color: #fff;
      font-weight: 500;
      line-height: 46px;
      text-align: center;
    }
    .submit i {
      display: block;
      width: 36px;
      height: 36px;
    }
  `];

  render() {
    return html`
      <h2 class="title"><i>${icons.message}</i>Envoyez-nous un message</h2>
      <div class="grid">
        <label><span class="label">Nom complet *</span><input class="input" placeholder="Votre nom complet" /></label>
        <label><span class="label">Email *</span><input class="input" placeholder="votre@email.com" /></label>
        <label class="wide"><span class="label">Sujet *</span><input class="input" placeholder="Sujet de votre message" /></label>
        <label class="wide"><span class="label">Message *</span><textarea class="input area" placeholder="Votre message..."></textarea></label>
      </div>
      <div class="submit">Envoyer le message<i>${icons.send}</i></div>
    `;
  }
}

@customElement("contact-line")
export class ContactLine extends LitElement {
  static styles = [iconStyles, css`
    :host {
      display: block;
    }
    .line {
      display: flex;
      gap: 28.8px;
      box-sizing: border-box;
      height: 145.4px;
      padding: 28.8px;
      border-radius: 14.4px;
    }
    .badge {
      display: grid;
      place-items: center;
      width: 86.4px;
      height: 86.4px;
      border-radius: 14.4px;
      background: #faeedb;
      color: #d1622b;
    }
    .badge i {
      width: 43.2px;
      height: 43.2px;
    }
    .title {
      margin: 0 0 7.2px;
      font: 600 28.8px/34.56px Poppins, sans-serif;
      color: #111827;
    }
    .value {
      margin: 0;
      line-height: 46.08px;
      color: #4b5563;
    }
    .hot {
      background: #fcfefe;
      box-shadow: 0 2px 4px rgba(0, 0, 0, 0.06), 0 4px 8px -2px rgba(0, 0, 0, 0.05);
    }
    .hot .badge {
      background: #e3a074;
      color: #eab592;
    }
    .hot .value {
      color: #9a5a38;
    }
  `];

  @property({ attribute: false }) icon?: TemplateResult;
  @property() title = "";
  @property() value = "";
  @property({ type: Boolean }) hot = false;

  render() {
    return html`<div class=${classMap({ line: true, hot: this.hot })}>
      <span class="badge"><i>${this.icon}</i></span>
      <div>
        <h3 class="title">${this.title}</h3>
        <p class="value">${this.value}</p>
      </div>
    </div>`;
  }
}

@customElement("app-root")
export class AppRoot extends LitElement {
  static styles = css`
    :host {
      display: block;
      position: relative;
      height: 2072px;
      overflow: hidden;
      background: #f9fafc;
      font: 400 28.8px/46.08px Inter, sans-serif;
      color: #4b5563;
    }
    .page {
      width: 3566px;
    }
    .top {
      position: relative;
      z-index: 2;
    }
    .top site-header {
      padding-right: 2px;
    }
    .hero {
      box-sizing: border-box;
      height: 468px;
      margin-top: -122px;
      padding: 144px 2px 0 0;
      text-align: center;
      background: linear-gradient(to bottom right, #e07e37, #c8622a 50%, #ac4a23);
    }
    .headline {
      margin: 0 0 43.2px;
      font: 700 86.4px/86.4px Poppins, sans-serif;
      color: #fff;
    }
    .lead {
      margin: 0;
      font-size: 36px;
      line-height: 50.4px;
      color: #fbecd5;
    }
    .main {
      display: grid;
      grid-template-columns: 1fr 1fr;
      gap: 86.4px;
      box-sizing: border-box;
      width: 2304px;
      margin: 0 auto;
      padding-top: 115.2px;
    }
    .info {
      display: flex;
      flex-direction: column;
      gap: 57.6px;
    }
    .heading {
      margin: 0 0 43.2px;
      font: 700 43.2px/57.6px Poppins, sans-serif;
      color: #111827;
    }
    .lines {
      display: flex;
      flex-direction: column;
      gap: 43.2px;
    }
    .card {
      padding: 43.2px;
      border-radius: 14.4px;
      background: #fff;
      box-shadow: 0 18px 27px -5.4px rgba(0, 0, 0, 0.1), 0 7.2px 10.8px -7.2px rgba(0, 0, 0, 0.1);
    }
    .subtitle {
      margin: 0 0 28.8px;
      font: 600 32.4px/50.4px Poppins, sans-serif;
      color: #111827;
    }
    .hours {
      display: flex;
      flex-direction: column;
      gap: 14.4px;
    }
    .row {
      display: flex;
      justify-content: space-between;
    }
    .text {
      margin: 0 0 28.8px;
    }
    .socials {
      display: flex;
      gap: 28.8px;
    }
    .social {
      width: 72px;
      height: 72px;
      border-radius: 14.4px;
      text-align: center;
      font-size: 25.2px;
      line-height: 72px;
      font-weight: 700;
      color: #fff;
    }
    .facebook {
      background: #d1622b;
    }
    .twitter {
      background: #6ea3f2;
    }
    .instagram {
      background: #db5599;
    }
    .dock {
      position: absolute;
      left: 648px;
      top: 1972px;
      z-index: 3;
    }
    .status {
      position: absolute;
      left: 0;
      bottom: 0;
      z-index: 3;
      box-sizing: border-box;
      width: 348px;
      height: 40px;
      padding-left: 8px;
      border: solid #474948;
      border-width: 1px 1px 0 0;
      border-radius: 0 9px 0 0;
      background: #202221;
      box-shadow: 0 4px 36px rgba(0, 0, 0, 0.3);
      font-size: 23.9px;
      line-height: 41px;
      color: #c7c8c7;
    }
  `;

  private hours = [
    ["Lundi - Vendredi", "9h00 - 18h00"],
    ["Samedi", "10h00 - 16h00"],
    ["Dimanche", "Fermé"],
  ];

  render() {
    return html`
      <div class="top"><site-header></site-header></div>
      <section class="hero">
        <h1 class="headline">Contactez-nous</h1>
        <p class="lead">Une question ? Une suggestion ? N'hésitez pas à nous contacter</p>
      </section>
      <div class="page">
        <main class="main">
          <contact-form></contact-form>
          <div class="info">
            <section>
              <h2 class="heading">Informations de contact</h2>
              <div class="lines">
                <contact-line .icon=${icons.mail} title="Email" value="contact@lafrique.com" hot></contact-line>
                <contact-line .icon=${icons.phone} title="Téléphone" value="+33 1 23 45 67 89"></contact-line>
                <contact-line .icon=${icons.pin} title="Adresse" value="Paris, France"></contact-line>
              </div>
            </section>
            <section class="card">
              <h3 class="subtitle">Horaires d'ouverture</h3>
              <div class="hours">
                ${this.hours.map(([day, time]) => html`<div class="row"><span>${day}</span><span>${time}</span></div>`)}
              </div>
            </section>
            <section class="card">
              <h3 class="subtitle">Réseaux sociaux</h3>
              <p class="text">Suivez-nous sur nos réseaux sociaux pour rester informés des dernières actualités</p>
              <div class="socials">
                <span class="social facebook">F</span>
                <span class="social twitter">T</span>
                <span class="social instagram">I</span>
              </div>
            </section>
          </div>
        </main>
      </div>
      <system-dock class="dock"></system-dock>
      <div class="status">mailto:contact@lafrique.com</div>
    `;
  }
}
